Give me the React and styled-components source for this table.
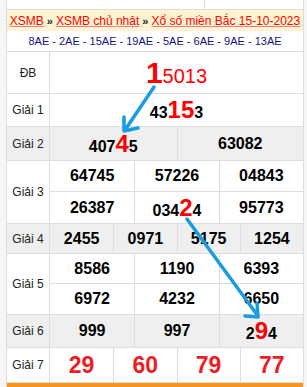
import React from "react";
import styled, { createGlobalStyle } from "styled-components";

const Global = createGlobalStyle`
  html, body { margin: 0; padding: 0; background: #ffffff; }
  body { font-family: "Liberation Sans", Arial, sans-serif; }
  * { box-sizing: border-box; }
`;

const Page = styled.div`
  position: relative;
  width: 307px;
  height: 387px;
  overflow: hidden;
  background: #f6f6f6;
  padding-left: 6px;
`;

const Board = styled.div`
  width: 298px;
  background: #ffffff;
  border-left: 1px solid #dddddd;
  border-right: 1px solid #dddddd;
`;

const TopStrip = styled.div`
  display: grid;
  grid-template-columns: 198px 1fr;
  height: 10px;
  border-bottom: 1px solid #dddddd;
`;

const StripCell = styled.div`
  border-right: ${(p) => (p.$last ? "none" : "1px solid #dddddd")};
`;

const Header = styled.div`
  height: 21px;
  background: #fff4d2;
  display: flex;
  align-items: center;
  justify-content: center;
  font-size: 12px;
  white-space: nowrap;
`;

const Crumb = styled.a`
  color: #ff0000;
  text-decoration: underline;
  text-decoration-color: #f08080;
`;

const Sep = styled.span`
  color: #222222;
  font-weight: bold;
  margin: 0 3px;
  font-size: 11px;
`;

const Codes = styled.div`
  height: 21px;
  border-bottom: 1px solid #dddddd;
  display: flex;
  align-items: center;
  justify-content: center;
  font-size: 11px;
  color: #141488;
  white-space: nowrap;
`;

const Row = styled.div`
  display: grid;
  grid-template-columns: 43px 1fr;
  height: ${(p) => p.$h}px;
  background: ${(p) => (p.$shade ? "#efefef" : "#ffffff")};
  border-bottom: 1px solid #dddddd;
`;

const Label = styled.div`
  border-right: 1px solid #dddddd;
  display: flex;
  align-items: center;
  justify-content: center;
  font-size: 12px;
  color: #222222;
`;

const Cells = styled.div`
  display: grid;
  grid-template-columns: repeat(${(p) => p.$cols}, 1fr);
  grid-template-rows: repeat(${(p) => p.$rows || 1}, 1fr);
`;

const Cell = styled.div`
  display: flex;
  align-items: center;
  justify-content: center;
  font-size: 16px;
  font-weight: bold;
  color: #000000;
  border-left: ${(p) => (p.$first ? "none" : "1px solid #dddddd")};
  border-bottom: ${(p) => (p.$top ? "1px solid #dddddd" : "none")};
  white-space: nowrap;
`;

const Num = styled.span`
  display: inline-flex;
  align-items: baseline;
`;

const Hot = styled.span`
  color: #ff0000;
  font-size: ${(p) => p.$size || 24}px;
  font-weight: bold;
  line-height: 1;
`;

const Special = styled.span`
  color: #ff0000;
  font-size: 20px;
  font-weight: normal;
  line-height: 1;
`;

const Last = styled.span`
  color: #ee1c24;
  font-size: 23px;
  font-weight: bold;
`;

const Footer = styled.div`
  height: 6px;
  background: #f7941d;
`;

const Arrows = styled.svg`
  position: absolute;
  left: 0;
  top: 0;
  width: 307px;
  height: 387px;
  pointer-events: none;
`;

function Line({ cols, rows = 1, items }) {
  return (
    <Cells $cols={cols} $rows={rows}>
      {items.map((it, i) => (
        <Cell key={i} $first={i % cols === 0} $top={rows > 1 && i < cols}>
          {it}
        </Cell>
      ))}
    </Cells>
  );
}

export default function App() {
  return (
    <>
      <Global />
      <Page>
        <Board>
          <TopStrip>
            <StripCell />
            <StripCell $last />
          </TopStrip>
          <Header>
            <Crumb>XSMB</Crumb>
            <Sep>»</Sep>
            <Crumb>XSMB chủ nhật</Crumb>
            <Sep>»</Sep>
            <Crumb>Xổ số miền Bắc 15-10-2023</Crumb>
          </Header>
          <Codes>8AE - 2AE - 15AE - 19AE - 5AE - 6AE - 9AE - 13AE</Codes>

          <Row $h={42}>
            <Label>ĐB</Label>
            <Line
              cols={1}
              items={[
                <Num>
                  <Hot $size={30}>1</Hot>
                  <Special>5013</Special>
                </Num>,
              ]}
            />
          </Row>
          <Row $h={33}>
            <Label>Giải 1</Label>
            <Line
              cols={1}
              items={[
                <Num>
                  43<Hot>15</Hot>3
                </Num>,
              ]}
            />
          </Row>
          <Row $h={34} $shade>
            <Label>Giải 2</Label>
            <Line
              cols={2}
              items={[
                <Num>
                  407<Hot>4</Hot>5
                </Num>,
                "63082",
              ]}
            />
          </Row>
          <Row $h={63}>
            <Label>Giải 3</Label>
            <Line
              cols={3}
              rows={2}
              items={[
                "64745",
                "57226",
                "04843",
                "26387",
                <Num>
                  034<Hot>2</Hot>4
                </Num>,
                "95773",
              ]}
            />
          </Row>
          <Row $h={30} $shade>
            <Label>Giải 4</Label>
            <Line cols={4} items={["2455", "0971", "5175", "1254"]} />
          </Row>
          <Row $h={61}>
            <Label>Giải 5</Label>
            <Line
              cols={3}
              rows={2}
              items={["8586", "1190", "6393", "6972", "4232", "6650"]}
            />
          </Row>
          <Row $h={33} $shade>
            <Label>Giải 6</Label>
            <Line
              cols={3}
              items={[
                "999",
                "997",
                <Num>
                  2<Hot>9</Hot>4
                </Num>,
              ]}
            />
          </Row>
          <Row $h={35}>
            <Label>Giải 7</Label>
            <Line
              cols={4}
              items={[
                <Last>29</Last>,
                <Last>60</Last>,
                <Last>79</Last>,
                <Last>77</Last>,
              ]}
            />
          </Row>
          <Footer />
        </Board>

        <Arrows viewBox="0 0 307 387">
          <g
            stroke="#1a9de0"
            strokeWidth="3.5"
            strokeLinecap="round"
            strokeLinejoin="round"
            fill="none"
          >
            <line x1="154" y1="87" x2="125" y2="130" />
            <polyline points="124,117 124,131 138,128" />
            <line x1="187" y1="219" x2="258" y2="316" />
            <polyline points="257,303 258,317 245,316" />
          </g>
        </Arrows>
      </Page>
    </>
  );
}
